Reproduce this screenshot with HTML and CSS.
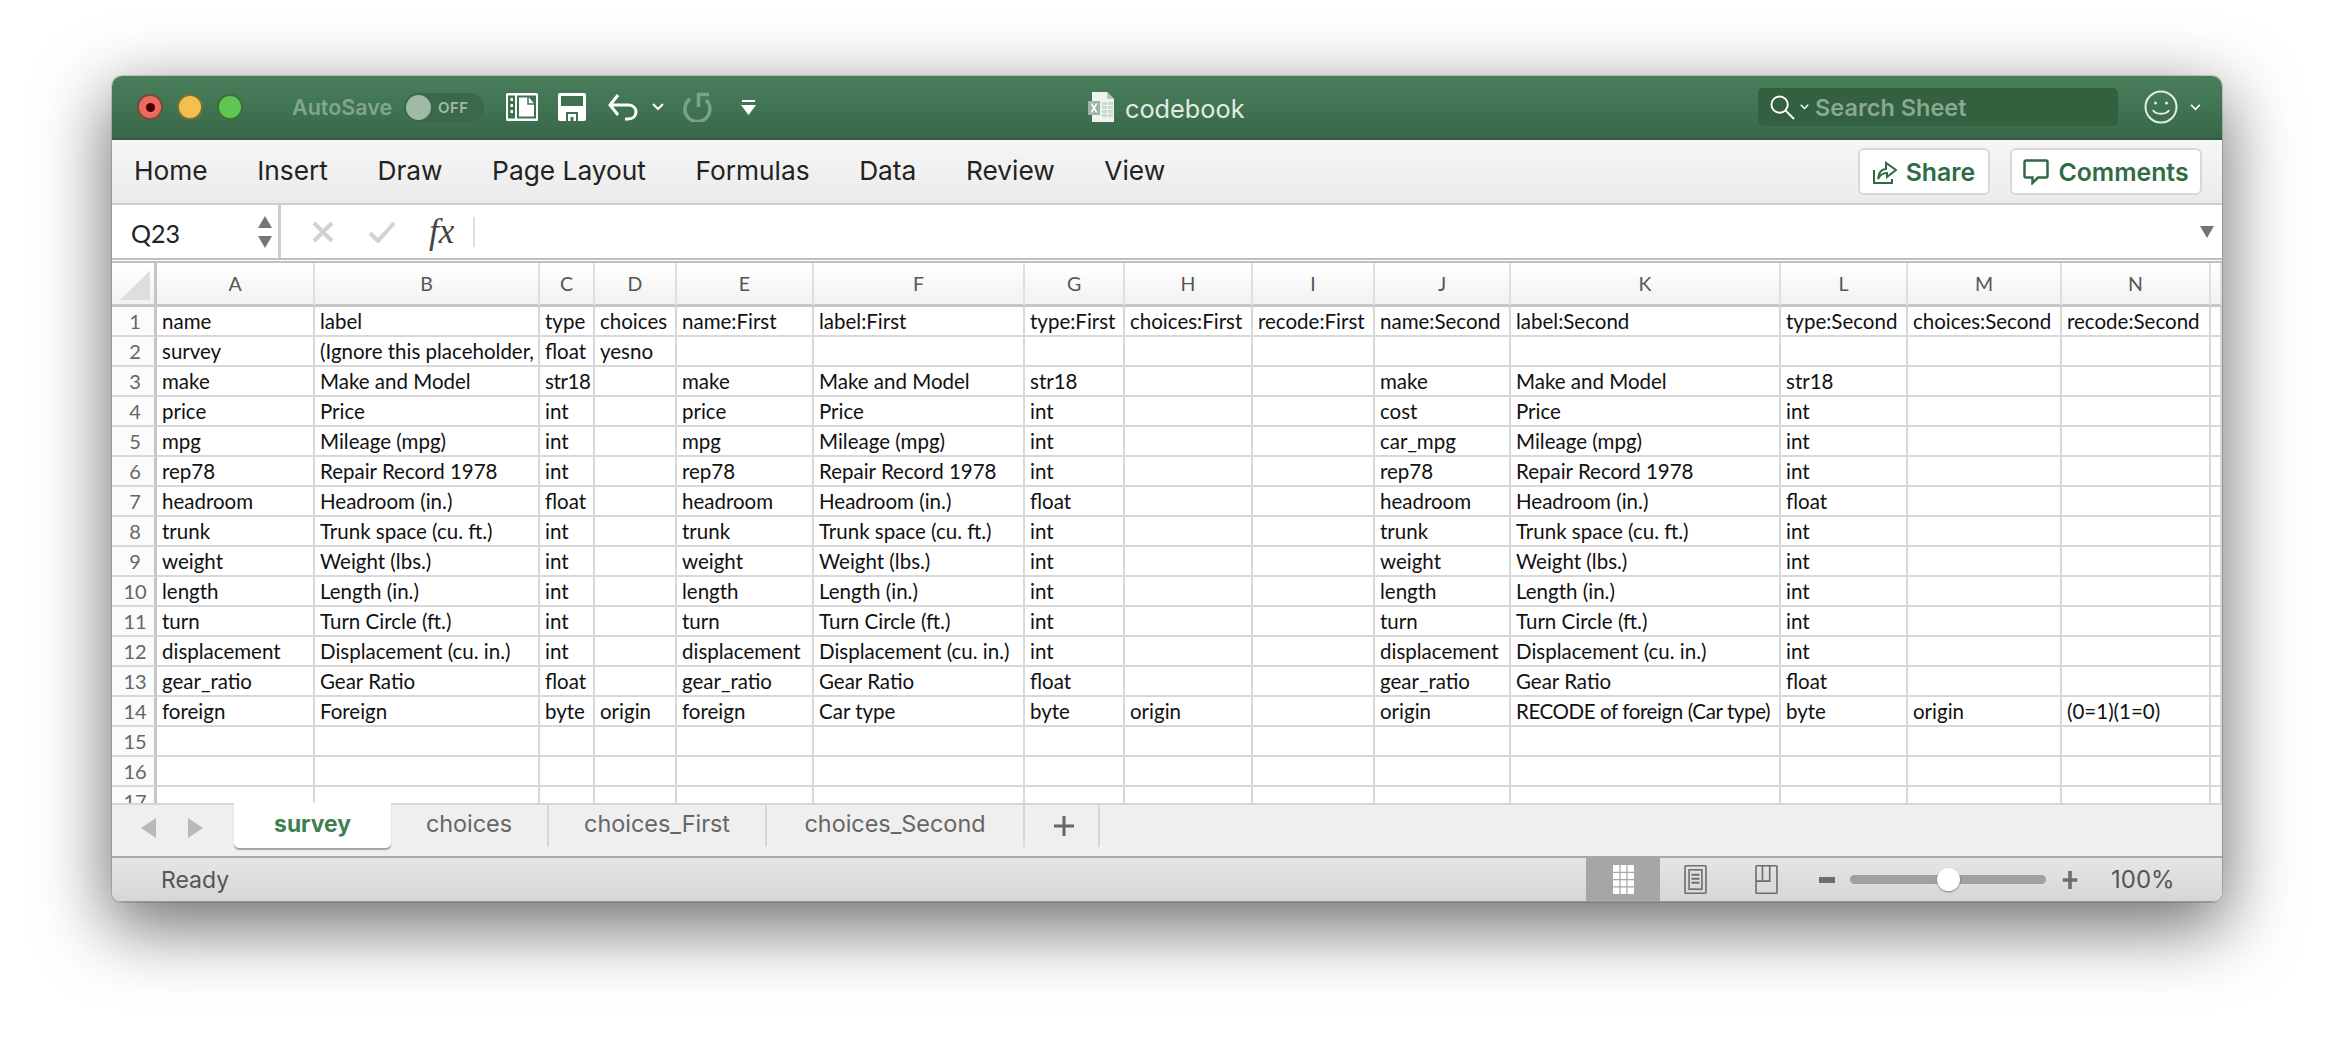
FILE: index.html
```html
<!DOCTYPE html>
<html lang="en">
<head>
<meta charset="utf-8">
<title>codebook</title>
<link rel="stylesheet" href="styles.css">
</head>
<body>
<main class="window">
  <header class="titlebar">
    <div class="lights">
      <span class="light red"><span class="red-dot"></span></span>
      <span class="light yellow"></span>
      <span class="light green"></span>
    </div>
    <span class="autosave">AutoSave</span>
    <span class="toggle"><span class="knob"></span><span class="off">OFF</span></span>
    <svg class="ic-side" viewBox="0 0 32 28"><path fill="#fff" d="M1.500 0h29A1.500 1.500 0 0 1 32 1.500v25a1.500 1.500 0 0 1-1.500 1.500h-29A1.500 1.500 0 0 1 0 26.500v-25A1.500 1.500 0 0 1 1.500 0z"/><path fill="#3f7150" d="M2 2.500h7v23H2zM11 2.500h19v23H11z"/><path fill="#fff" d="M4.500 5h2.500v3H4.500zM4.500 11h2.500v3H4.500zM4.500 17h2.500v3H4.500zM13 4.500h10l5 6V23.500H13z"/><path fill="none" stroke="#3f7150" stroke-width="1.500" d="M22 4v7h6"/></svg>
    <svg class="ic-save" viewBox="0 0 28 28"><path fill="#fff" d="M2 0h24a2 2 0 0 1 2 2v24a2 2 0 0 1-2 2H2a2 2 0 0 1-2-2V2a2 2 0 0 1 2-2z"/><path fill="#3f7150" d="M3 3h22v10H3zM8 19h12v9H8z"/><path fill="#fff" d="M10 21h8v7h-2.500v-4h-3v4H10z"/></svg>
    <svg class="ic-undo" viewBox="0 0 30 28" fill="none" stroke="#fff" stroke-width="3"><path d="M10 2 2 12l8 10M2 12h18c5 0 8 3 8 7s-3 7-8 7h-3"/></svg>
    <svg class="ic-chev" viewBox="0 0 12 8" fill="none" stroke="#fff" stroke-width="2"><path d="m1 1 5 5 5-5"/></svg>
    <svg class="ic-redo" viewBox="0 0 30 30" fill="none" stroke="#7ba287" stroke-width="3.500"><path d="M8 7A12.500 12.500 0 1 0 24 8M16.500 15V2.500H27"/></svg>
    <svg class="ic-more" viewBox="0 0 15 15"><path fill="#fff" d="M1 0h13v2H1zM0 5h15l-7.500 10z"/></svg>
    <div class="docname">
      <svg class="ic-doc" viewBox="0 0 26 30"><path fill="#eef3ef" d="M4 0h15l7 7v23H4z"/><path fill="#b4c4b9" d="M19 0v7h7z"/><path fill="#c7dccd" d="M14 10h5v3h-5zM20 10h5v3h-5zM14 14h5v3h-5zM20 14h5v3h-5zM14 18h5v3h-5zM20 18h5v3h-5zM14 22h5v3h-5zM20 22h5v3h-5z"/><path fill="#9db5a5" d="M0 9h12v14H0z"/><path fill="#fff" d="M2.500 11.500h1.800L6 14.500l1.700-3h1.800L7 16l2.500 4.500H7.700L6 17.500l-1.700 3H2.500L5 16z"/></svg>
      <span class="doctitle">codebook</span>
    </div>
    <div class="search">
      <svg class="ic-mag" viewBox="0 0 26 26" fill="none" stroke="#fff" stroke-width="2"><circle cx="10" cy="10" r="8.500"/><path d="m16 16 9 9"/></svg>
      <svg class="ic-chev-s" viewBox="0 0 12 8" fill="none" stroke="#fff" stroke-width="2"><path d="m1 1 5 5 5-5"/></svg>
      <span class="search-text">Search Sheet</span>
    </div>
    <svg class="ic-smile" viewBox="0 0 34 34" fill="none" stroke="#e4ece6" stroke-width="2"><circle cx="17" cy="17" r="15.500"/><circle cx="11.500" cy="13" r="1.500" fill="#e4ece6" stroke="none"/><circle cx="22.500" cy="13" r="1.500" fill="#e4ece6" stroke="none"/><path d="M9 20c2 5 14 5 16 0"/></svg>
    <svg class="ic-chev-u" viewBox="0 0 12 8" fill="none" stroke="#fff" stroke-width="2"><path d="m1 1 5 5 5-5"/></svg>
  </header>

  <nav class="ribbon">
    <span class="rtab">Home</span>
    <span class="rtab">Insert</span>
    <span class="rtab">Draw</span>
    <span class="rtab">Page Layout</span>
    <span class="rtab">Formulas</span>
    <span class="rtab">Data</span>
    <span class="rtab">Review</span>
    <span class="rtab">View</span>
    <button class="btn btn-share">
      <svg class="ic-share" viewBox="0 0 24 26" fill="none" stroke="#2f6b45" stroke-width="2"><path d="M1 11v13h18v-4M5 20c1-8 5-10 8-10V4l10 7-9 7v-4c-4 0-7 2-9 6z"/></svg>
      <span>Share</span>
    </button>
    <button class="btn btn-comments">
      <svg class="ic-comment" viewBox="0 0 26 26" fill="none" stroke="#2f6b45" stroke-width="2.500"><path d="M3 1.500h20a1.500 1.500 0 0 1 1.500 1.500v14a1.500 1.500 0 0 1-1.500 1.500H15l-5.500 5.500v-5.500H3A1.500 1.500 0 0 1 1.500 17V3A1.500 1.500 0 0 1 3 1.500z"/></svg>
      <span>Comments</span>
    </button>
  </nav>

  <section class="formula">
    <div class="namebox">
      <span class="cellref">Q23</span>
      <span class="stepper">
        <svg class="tri" viewBox="0 0 14 12"><path fill="#757575" d="M7 0l7 12H0z"/></svg>
        <svg class="tri" viewBox="0 0 14 12"><path fill="#757575" d="M7 12 0 0h14z"/></svg>
      </span>
    </div>
    <svg class="ic-x" viewBox="0 0 22 22" fill="none" stroke="#d2d2d2" stroke-width="4"><path d="m2 2 18 18M20 2 2 20"/></svg>
    <svg class="ic-check" viewBox="0 0 28 22" fill="none" stroke="#d2d2d2" stroke-width="4"><path d="m2 12 8 8L26 2"/></svg>
    <span class="fx">fx</span>
    <span class="fdiv"></span>
    <svg class="ic-fdrop" viewBox="0 0 14 12"><path fill="#757575" d="M7 12 0 0h14z"/></svg>
  </section>

  <section class="sheet">
    <table class="grid">
      <colgroup>
        <col class="c-rh"><col class="c-a"><col class="c-b"><col class="c-c"><col class="c-d"><col class="c-e"><col class="c-f"><col class="c-g"><col class="c-h"><col class="c-i"><col class="c-j"><col class="c-k"><col class="c-l"><col class="c-m"><col class="c-n"><col class="c-o">
      </colgroup>
      <thead>
        <tr><th class="corner"><span class="corner-tri"></span></th><th>A</th><th>B</th><th>C</th><th>D</th><th>E</th><th>F</th><th>G</th><th>H</th><th>I</th><th>J</th><th>K</th><th>L</th><th>M</th><th>N</th><th></th></tr>
      </thead>
      <tbody>
        <tr><th>1</th><td>name</td><td>label</td><td>type</td><td>choices</td><td>name:First</td><td>label:First</td><td>type:First</td><td>choices:First</td><td>recode:First</td><td>name:Second</td><td>label:Second</td><td>type:Second</td><td>choices:Second</td><td>recode:Second</td><td></td></tr>
        <tr><th>2</th><td>survey</td><td>(Ignore this placeholder,</td><td>float</td><td>yesno</td><td></td><td></td><td></td><td></td><td></td><td></td><td></td><td></td><td></td><td></td><td></td></tr>
        <tr><th>3</th><td>make</td><td>Make and Model</td><td class="tight">str18</td><td></td><td>make</td><td>Make and Model</td><td>str18</td><td></td><td></td><td>make</td><td>Make and Model</td><td>str18</td><td></td><td></td><td></td></tr>
        <tr><th>4</th><td>price</td><td>Price</td><td>int</td><td></td><td>price</td><td>Price</td><td>int</td><td></td><td></td><td>cost</td><td>Price</td><td>int</td><td></td><td></td><td></td></tr>
        <tr><th>5</th><td>mpg</td><td>Mileage (mpg)</td><td>int</td><td></td><td>mpg</td><td>Mileage (mpg)</td><td>int</td><td></td><td></td><td>car_mpg</td><td>Mileage (mpg)</td><td>int</td><td></td><td></td><td></td></tr>
        <tr><th>6</th><td>rep78</td><td>Repair Record 1978</td><td>int</td><td></td><td>rep78</td><td>Repair Record 1978</td><td>int</td><td></td><td></td><td>rep78</td><td>Repair Record 1978</td><td>int</td><td></td><td></td><td></td></tr>
        <tr><th>7</th><td>headroom</td><td>Headroom (in.)</td><td>float</td><td></td><td>headroom</td><td>Headroom (in.)</td><td>float</td><td></td><td></td><td>headroom</td><td>Headroom (in.)</td><td>float</td><td></td><td></td><td></td></tr>
        <tr><th>8</th><td>trunk</td><td>Trunk space (cu. ft.)</td><td>int</td><td></td><td>trunk</td><td>Trunk space (cu. ft.)</td><td>int</td><td></td><td></td><td>trunk</td><td>Trunk space (cu. ft.)</td><td>int</td><td></td><td></td><td></td></tr>
        <tr><th>9</th><td>weight</td><td>Weight (lbs.)</td><td>int</td><td></td><td>weight</td><td>Weight (lbs.)</td><td>int</td><td></td><td></td><td>weight</td><td>Weight (lbs.)</td><td>int</td><td></td><td></td><td></td></tr>
        <tr><th>10</th><td>length</td><td>Length (in.)</td><td>int</td><td></td><td>length</td><td>Length (in.)</td><td>int</td><td></td><td></td><td>length</td><td>Length (in.)</td><td>int</td><td></td><td></td><td></td></tr>
        <tr><th>11</th><td>turn</td><td>Turn Circle (ft.)</td><td>int</td><td></td><td>turn</td><td>Turn Circle (ft.)</td><td>int</td><td></td><td></td><td>turn</td><td>Turn Circle (ft.)</td><td>int</td><td></td><td></td><td></td></tr>
        <tr><th>12</th><td>displacement</td><td>Displacement (cu. in.)</td><td>int</td><td></td><td>displacement</td><td>Displacement (cu. in.)</td><td>int</td><td></td><td></td><td>displacement</td><td>Displacement (cu. in.)</td><td>int</td><td></td><td></td><td></td></tr>
        <tr><th>13</th><td>gear_ratio</td><td>Gear Ratio</td><td>float</td><td></td><td>gear_ratio</td><td>Gear Ratio</td><td>float</td><td></td><td></td><td>gear_ratio</td><td>Gear Ratio</td><td>float</td><td></td><td></td><td></td></tr>
        <tr><th>14</th><td>foreign</td><td>Foreign</td><td>byte</td><td>origin</td><td>foreign</td><td>Car type</td><td>byte</td><td>origin</td><td></td><td>origin</td><td class="tight">RECODE of foreign (Car type)</td><td>byte</td><td>origin</td><td>(0=1)(1=0)</td><td></td></tr>
        <tr><th>15</th><td></td><td></td><td></td><td></td><td></td><td></td><td></td><td></td><td></td><td></td><td></td><td></td><td></td><td></td><td></td></tr>
        <tr><th>16</th><td></td><td></td><td></td><td></td><td></td><td></td><td></td><td></td><td></td><td></td><td></td><td></td><td></td><td></td><td></td></tr>
        <tr><th>17</th><td></td><td></td><td></td><td></td><td></td><td></td><td></td><td></td><td></td><td></td><td></td><td></td><td></td><td></td><td></td></tr>
      </tbody>
    </table>
  </section>

  <section class="tabbar">
    <div class="tabnav">
      <svg class="arrow" viewBox="0 0 15 20"><path fill="#b9b9b9" d="M15 0v20L0 10z"/></svg>
      <svg class="arrow" viewBox="0 0 15 20"><path fill="#b9b9b9" d="M0 0v20l15-10z"/></svg>
    </div>
    <span class="tab tab-active">survey</span>
    <span class="tab tab-choices">choices</span>
    <span class="tab tab-first">choices_First</span>
    <span class="tab tab-second">choices_Second</span>
    <span class="tab tab-add">
      <svg class="plus" viewBox="0 0 20 20"><path fill="#666" d="M8.500 0h3v8.500H20v3h-8.500V20h-3v-8.500H0v-3h8.500z"/></svg>
    </span>
  </section>

  <footer class="status">
    <span class="ready">Ready</span>
    <div class="views">
      <span class="view view-on">
        <svg class="ic-view" viewBox="0 0 26 36"><path fill="#fff" d="M1 0h24a1 1 0 0 1 1 1v34a1 1 0 0 1-1 1H1a1 1 0 0 1-1-1V1a1 1 0 0 1 1-1z"/><path fill="#a6a6a6" d="M8 0h1.500v36H8zM16.500 0H18v36h-1.500zM0 8.500h26V10H0zM0 17.500h26V19H0zM0 26.500h26V28H0z"/></svg>
      </span>
      <span class="view">
        <svg class="ic-view" viewBox="0 0 28 36" fill="none" stroke="#6d6d6d" stroke-width="2"><rect x="1" y="1" width="26" height="34" rx="1"/><rect x="6" y="6" width="16" height="24"/><path stroke-width="2.500" d="M9 12h10M9 17h10M9 22h10"/></svg>
      </span>
      <span class="view">
        <svg class="ic-view" viewBox="0 0 28 36" fill="none" stroke="#6d6d6d" stroke-width="2"><rect x="1" y="1" width="26" height="34" rx="1"/><path d="M1 20h17V1M9 1v19"/></svg>
      </span>
    </div>
    <svg class="zoom-minus" viewBox="0 0 16 6"><path fill="#6d6d6d" d="M0 0h16v6H0z"/></svg>
    <span class="track"><span class="thumb"></span></span>
    <svg class="zoom-plus" viewBox="0 0 16 20"><path fill="#6d6d6d" d="M6 0h4v8h6v4h-6v8H6v-8H0V8h6z"/></svg>
    <span class="pct">100%</span>
  </footer>
</main>
</body>
</html>
```
FILE: styles.css
```css
* { box-sizing: border-box; }
html, body { margin: 0; padding: 0; }
body {
  width: 2334px;
  height: 1050px;
  background: #fff;
  overflow: hidden;
  font-family: "Inter", "Liberation Sans", sans-serif;
  padding: 76px 112px 0 112px;
}
svg { display: block; flex: none; }

.window {
  width: 2110px;
  height: 826px;
  border-radius: 10px;
  overflow: hidden;
  display: flex;
  flex-direction: column;
  background: #fff;
  box-shadow: 0 0 0 1px rgba(0,0,0,.14), 0 22px 70px 4px rgba(0,0,0,.56);
}

/* Title bar */
.titlebar {
  height: 64px;
  flex: none;
  display: flex;
  align-items: center;
  padding-left: 25px;
  background: linear-gradient(#4a7f5b, #37684a);
  border-bottom: 2px solid #2f5a3f;
}
.lights { display: flex; gap: 14px; }
.light {
  width: 26px;
  height: 26px;
  border-radius: 50%;
  border: 2px solid rgba(20,50,30,.55);
  display: flex;
  align-items: center;
  justify-content: center;
}
.red { background: #ee6a5f; }
.red-dot { width: 9px; height: 9px; border-radius: 50%; background: #4b0000; }
.yellow { background: #f5bf4f; }
.green { background: #61c554; }
.autosave {
  margin-left: 49px;
  width: 102px;
  font-size: 21.500px;
  font-weight: 600;
  color: #80a68c;
  white-space: nowrap;
}
.toggle {
  margin-left: 10px;
  width: 80px;
  height: 29px;
  border-radius: 15px;
  background: #3a6849;
  display: flex;
  align-items: center;
  padding-left: 2px;
}
.knob { width: 25px; height: 25px; border-radius: 50%; background: #9fbba8; }
.off { margin-left: 7px; font-size: 15px; font-weight: 600; color: #9fbba8; letter-spacing: .5px; }
.ic-side { width: 32px; height: 28px; margin-left: 22px; }
.ic-save { width: 28px; height: 28px; margin-left: 20px; }
.ic-undo { width: 30px; height: 28px; margin-left: 22px; }
.ic-chev { width: 12px; height: 8px; margin-left: 14px; }
.ic-redo { width: 30px; height: 30px; margin-left: 18px; }
.ic-more { width: 15px; height: 15px; margin-left: 29px; }

.docname { display: flex; align-items: center; gap: 11px; margin-left: 332px; width: 670px; }
.ic-doc { width: 26px; height: 30px; }
.doctitle { font-size: 25.300px; color: #e3ebe5; padding-top: 2px; }
.search {
  width: 360px;
  height: 38px;
  border-radius: 5px;
  background: #33603f;
  display: flex;
  align-items: center;
  padding-left: 12px;
}
.ic-mag { width: 25px; height: 25px; }
.ic-chev-s { width: 9px; height: 6px; margin-left: 5px; }
.search-text { margin-left: 6px; font-size: 23.500px; font-weight: 600; color: #88a992; white-space: nowrap; }
.ic-smile { width: 34px; height: 34px; margin-left: 26px; }
.ic-chev-u { width: 11px; height: 7px; margin-left: 12px; }

/* Ribbon */
.ribbon {
  height: 65px;
  flex: none;
  display: flex;
  align-items: center;
  padding: 0 0 2px 22px;
  gap: 49.500px;
  background: linear-gradient(#f6f6f6, #ebebeb);
  border-bottom: 2px solid #cfcfcf;
}
.rtab { font-size: 26.300px; color: #222; white-space: nowrap; }
.btn {
  height: 47px;
  margin-top: 2px;
  display: flex;
  align-items: center;
  justify-content: center;
  gap: 9px;
  padding: 0;
  background: #fff;
  border: 2px solid #d8d8d8;
  border-radius: 6px;
  font-family: inherit;
  font-size: 24.800px;
  font-weight: 600;
  color: #2f6b45;
}
.btn-share { width: 132px; margin-left: auto; }
.btn-comments { width: 192px; margin-left: -29.500px; margin-right: 20px; }
.ic-share { width: 24px; height: 26px; }
.ic-comment { width: 26px; height: 26px; }

/* Formula bar */
.formula {
  height: 58px;
  flex: none;
  display: flex;
  align-items: center;
  background: #fff;
  border-bottom: 5px double #c0c0c0;
}
.namebox {
  width: 169px;
  align-self: stretch;
  display: flex;
  align-items: center;
  justify-content: space-between;
  padding: 0 6px 0 19px;
  border-right: 3px solid #cdcdcd;
}
.cellref { font-family: "Lato", sans-serif; font-size: 25px; color: #222; padding-top: 3px; }
.stepper { display: flex; flex-direction: column; gap: 8px; }
.tri { width: 14px; height: 12px; }
.ic-x { width: 22px; height: 22px; margin-left: 31px; }
.ic-check { width: 28px; height: 22px; margin-left: 34px; }
.fx {
  margin-left: 33px;
  width: 39px;
  font-family: "Liberation Serif", serif;
  font-style: italic;
  font-size: 35px;
  color: #444;
}
.fdiv { width: 2px; height: 30px; background: #dedede; margin-left: 5px; }
.ic-fdrop { width: 14px; height: 12px; margin-left: auto; margin-right: 8px; }

/* Sheet */
.sheet { height: 540px; flex: none; overflow: hidden; background: #fff; }
.grid {
  width: 2110px;
  table-layout: fixed;
  border-collapse: separate;
  border-spacing: 0;
  font-family: "Lato", sans-serif;
  font-size: 20.500px;
  color: #111;
}
.c-rh { width: 45px; }
.c-a { width: 158px; }
.c-b { width: 225px; }
.c-c { width: 55px; }
.c-d { width: 82px; }
.c-e { width: 137px; }
.c-f { width: 211px; }
.c-g { width: 100px; }
.c-h { width: 128px; }
.c-i { width: 122px; }
.c-j { width: 136px; }
.c-k { width: 270px; }
.c-l { width: 127px; }
.c-m { width: 154px; }
.c-n { width: 149px; }
.c-o { width: 11px; }

.grid thead th {
  height: 44px;
  padding: 0;
  font-size: 19.500px;
  font-weight: 400;
  color: #555;
  background: linear-gradient(#fff, #f2f2f2);
  border-right: 2px solid #dfdfdf;
  border-bottom: 3px solid #c6c6c6;
  text-align: center;
}
.grid thead th.corner {
  position: relative;
  border-right: 3px solid #c6c6c6;
}
.corner-tri {
  position: absolute;
  right: 4px;
  bottom: 4px;
  width: 30px;
  height: 30px;
  background: linear-gradient(to bottom right, transparent 50%, #dedede 50%);
}
.grid tbody th {
  height: 30px;
  padding: 0 0 0 4px;
  font-size: 20px;
  font-weight: 400;
  color: #666;
  text-align: center;
  background: #fbfbfb;
  border-right: 3px solid #c6c6c6;
  border-bottom: 2px solid #d8d8d8;
}
.grid td {
  height: 30px;
  padding: 0 0 0 5px;
  white-space: nowrap;
  overflow: hidden;
  border-right: 2px solid #d8d8d8;
  border-bottom: 2px solid #d8d8d8;
}
.grid td.tight { letter-spacing: -.4px; }

/* Tabs */
.tabbar {
  height: 53px;
  flex: none;
  display: flex;
  align-items: flex-start;
  background: #efefef;
  border-top: 2px solid #d6d6d6;
}
.tabnav { width: 122px; height: 50px; display: flex; align-items: center; gap: 32px; padding: 0 0 4px 29px; }
.arrow { width: 15px; height: 20px; }
.tab {
  height: 42px;
  display: flex;
  align-items: center;
  justify-content: center;
  padding-bottom: 5px;
  font-size: 23.400px;
  color: #666;
  border-right: 2px solid #d6d6d6;
  white-space: nowrap;
}
.tab-active {
  width: 157px;
  height: 45px;
  margin-top: -2px;
  background: #fff;
  border-right: 0;
  border-radius: 0 0 5px 5px;
  box-shadow: 0 2px 1px rgba(0,0,0,.32);
  color: #3f8053;
  font-weight: 700;
  font-size: 22.800px;
}
.tab-choices { width: 158px; }
.tab-first { width: 218px; }
.tab-second { width: 258px; }
.tab-add { width: 75px; padding: 0 0 0 4px; }
.plus { width: 20px; height: 20px; }

/* Status */
.status {
  height: 46px;
  flex: none;
  display: flex;
  align-items: center;
  padding-left: 49px;
  background: linear-gradient(#e6e6e6, #d6d6d6);
  border-top: 2px solid #a8a8a8;
  border-bottom: 1px solid #999;
}
.ready { width: 1425px; font-size: 23px; color: #555; }
.views { display: flex; align-self: stretch; }
.view { width: 71px; display: flex; align-items: center; justify-content: center; }
.view-on { width: 74px; background: #a6a6a6; }
.ic-view { width: 27px; height: 29px; }
.zoom-minus { width: 16px; height: 6px; margin-left: 17px; }
.track {
  width: 196px;
  height: 9px;
  margin-left: 15px;
  border-radius: 5px;
  background: #a0a0a0;
  display: flex;
  align-items: center;
  padding-left: 87px;
}
.thumb {
  width: 23px;
  height: 23px;
  border-radius: 50%;
  background: #fff;
  box-shadow: 0 1px 2px rgba(0,0,0,.4);
  flex: none;
}
.zoom-plus { width: 16px; height: 18px; margin-left: 16px; }
.pct { margin-left: 33px; font-size: 24px; color: #555; }
```
